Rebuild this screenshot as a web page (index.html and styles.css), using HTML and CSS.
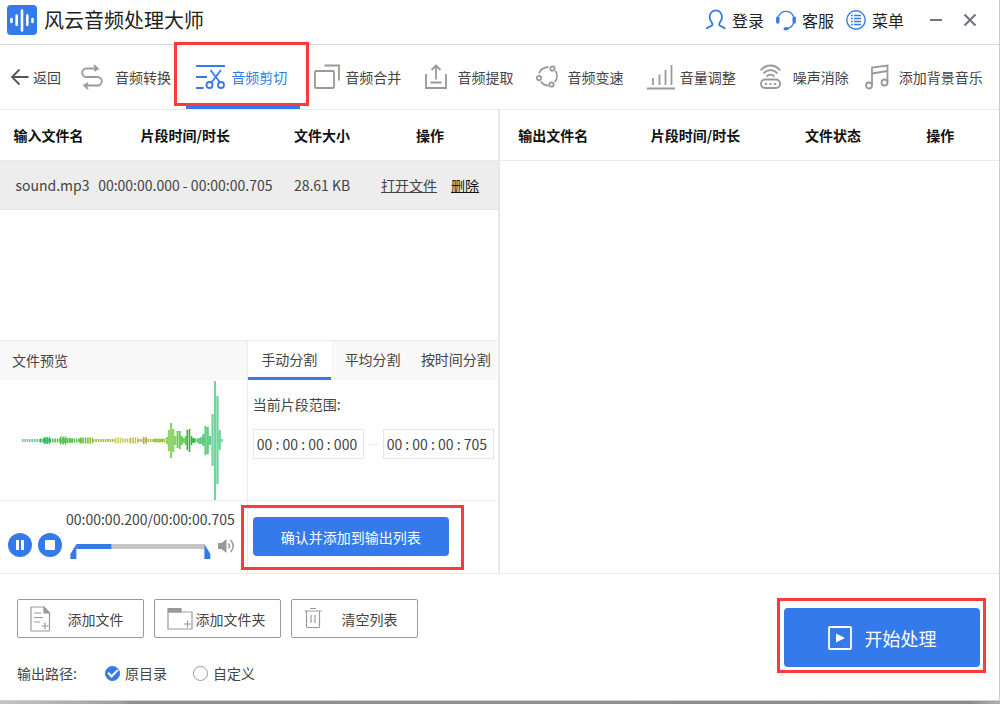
FILE: index.html
```html
<!DOCTYPE html>
<html lang="zh-CN">
<head>
<meta charset="utf-8">
<title>风云音频处理大师</title>
<link rel="stylesheet" href="styles.css">
</head>
<body>
<div class="window">
  <header class="titlebar">
    <svg class="logo" width="30" height="30" viewBox="0 0 30 30"><rect width="30" height="30" rx="4" fill="#357aea"/><path d="M4.500 14v3M9.700 10.500v9.500M15 5.500v20M20.300 10.500v9.500M25.500 14v3" stroke="#fff" stroke-width="2.600" stroke-linecap="round"/></svg>
    <h1 class="app-name">风云音频处理大师</h1>
    <nav class="account">
      <button class="account-item"><svg width="22" height="22" viewBox="0 0 22 22" fill="none" stroke="#357aea" stroke-width="1.800"><path d="M1.500 20c.8-2 3.800-2.200 5.500-3.500C8 15.500 7.500 14.500 6.500 13 5.200 11.200 4.600 9.500 4.600 8a6 6.500 0 0 1 12.400 0c0 1.500-.6 3.200-1.900 5-1 1.500-1.500 2.500-.5 3.500 1.700 1.300 4.700 1.500 5.500 3.500"/></svg>登录</button>
      <button class="account-item"><svg width="22" height="22" viewBox="0 0 22 22" fill="none" stroke="#357aea"><path d="M3.500 7.500a8 8 0 0 1 15 0M18.500 14c-1 3-3.500 5-6.500 5.500" stroke-width="1.300"/><path d="M2.800 9v4M19.200 9v4" stroke-width="3.400" stroke-linecap="round"/><path d="M10 19.800h2" stroke-width="3" stroke-linecap="round"/></svg>客服</button>
      <button class="account-item"><svg width="22" height="22" viewBox="0 0 22 22" fill="none" stroke="#357aea"><circle cx="11" cy="11" r="9.200" stroke-width="1.400"/><path d="M6 6.500h1.800M9 6.500h7M6 9.500h1.800M9 9.500h7M6 12.500h1.800M9 12.500h7M6 15.500h1.800M9 15.500h7" stroke-width="1.500"/></svg>菜单</button>
    </nav>
    <button class="win-button" aria-label="最小化"><svg width="14" height="14" viewBox="0 0 14 14"><path d="M1 7h12" stroke="#777380" stroke-width="2"/></svg></button>
    <button class="win-button" aria-label="关闭"><svg width="14" height="14" viewBox="0 0 14 14"><path d="M1.500 1.500l11 11M12.500 1.500l-11 11" stroke="#777380" stroke-width="2.200"/></svg></button>
  </header>

  <nav class="toolbar">
    <button class="tool tool-back"><svg width="18" height="20" viewBox="0 0 18 20" fill="none" stroke="#555" stroke-width="1.800"><path d="M17.500 10H1M8.500 2.500L1 10l7.500 7.500"/></svg>返回</button>
    <button class="tool tool-wide"><svg width="22" height="26" viewBox="0 0 22 26" fill="none" stroke="#999" stroke-width="1.800"><path d="M13 1.200l3.500 3.300H5.500a4.200 4.200 0 0 0 0 8.500h11a4.200 4.200 0 0 1 0 8.500H3.500L7 25M16.500 4.500L13.500 7M3.500 21.500L7 19"/></svg>音频转换</button>
    <button class="tool tool-tight tool-active"><svg width="30" height="26" viewBox="0 0 30 26" fill="none" stroke="#357aea" stroke-width="1.800"><path d="M0 2h29M0 13h11M0 24h7.500M14.500 6l9.500 12.500M25 6l-9.500 12.500"/><circle cx="13.500" cy="21" r="3"/><circle cx="25" cy="21" r="3"/></svg>音频剪切<span class="mark mark-tool"></span></button>
    <button class="tool tool-tight"><svg width="26" height="26" viewBox="0 0 26 26" fill="none" stroke="#999" stroke-width="1.800"><rect x="1" y="7" width="19" height="17" rx="1"/><path d="M10.500 1.500H25v15"/></svg>音频合并</button>
    <button class="tool"><svg width="22" height="26" viewBox="0 0 22 26" fill="none" stroke="#999" stroke-width="1.800"><path d="M1 10v14h20V10M11 15.500V2M6.500 6L11 1.500 15.500 6M5.500 18.500h11"/></svg>音频提取</button>
    <button class="tool"><svg width="22" height="26" viewBox="0 0 22 26" fill="none" stroke="#999" stroke-width="1.800"><circle cx="16.500" cy="4.500" r="2.200"/><circle cx="3" cy="14" r="2.200"/><circle cx="15.500" cy="20.500" r="2.200"/><path d="M3 9.500c1-3.500 4-6 9.500-6.500M19.500 7c2 3 2.200 7.500-.8 11M5 17.500c1.500 2.500 4 4 7.500 4"/></svg>音频变速</button>
    <button class="tool tool-tight"><svg width="28" height="26" viewBox="0 0 28 26" fill="none" stroke="#999" stroke-width="1.800"><path d="M0 24.500h28M6 21v-7M12.500 21V10.500M18.500 21V6M24.500 21V1"/></svg>音量调整</button>
    <button class="tool tool-wide"><svg width="21" height="26" viewBox="0 0 21 26" fill="none" stroke="#999" stroke-width="1.800"><path d="M.8 6.500C6-.2 15-.2 20.200 6.500M3.500 9.500c4-4.600 10-4.600 14 0M6.500 12.500c2.500-2.500 5.500-2.500 8 0"/><rect x="1" y="15.500" width="19" height="8.500" rx="4"/><path d="M5 20h2M9.500 20h2M14 20h2"/></svg>噪声消除</button>
    <button class="tool"><svg width="24" height="26" viewBox="0 0 24 26" fill="none" stroke="#999" stroke-width="1.800"><circle cx="4" cy="21.500" r="3"/><circle cx="19.500" cy="18.500" r="3"/><path d="M7 21.500V3.500L22.500 1.500v17M7 9.500l15.500-2.500"/></svg>添加背景音乐</button>
  </nav>

  <main class="workspace">
    <section class="input-pane">
      <table class="files files-in">
        <colgroup><col class="c-name"><col class="c-time"><col class="c-size"><col></colgroup>
        <thead><tr><th>输入文件名</th><th>片段时间/时长</th><th>文件大小</th><th>操作</th></tr></thead>
        <tbody><tr><td>sound.mp3</td><td>00:00:00.000 - 00:00:00.705</td><td>28.61 KB</td><td><a class="open" href="#open">打开文件</a><a class="remove" href="#remove">删除</a></td></tr></tbody>
      </table>
      <div class="editor">
        <section class="preview">
          <h2 class="preview-title">文件预览</h2>
          <svg class="wave" viewBox="0 0 247 120" height="120" fill="none">
            <g stroke-dasharray="1.600 .8">
              <path d="M22 60.500h18" stroke="#67cba0" stroke-width="3"/>
              <path d="M40 60.500h12" stroke="#2fb957" stroke-width="4"/>
              <path d="M44 60.500h6" stroke="#2fb957" stroke-width="7"/>
              <path d="M52 60.500h30" stroke="#54bf4c" stroke-width="4"/>
              <path d="M60 60.500h7" stroke="#54bf4c" stroke-width="8"/>
              <path d="M67 60.500h6" stroke="#60c253" stroke-width="5"/>
              <path d="M80 60.500h13" stroke="#7cba38" stroke-width="6"/>
              <path d="M93 60.500h22" stroke="#a6bd3b" stroke-width="3"/>
              <path d="M115 60.500h7" stroke="#cbd064" stroke-width="6"/>
              <path d="M122 60.500h8" stroke="#c8c958" stroke-width="4"/>
              <path d="M130 60.500h8" stroke="#c4c44b" stroke-width="6"/>
              <path d="M138 60.500h26" stroke="#a9ba30" stroke-width="3"/>
              <path d="M143 60.500h4" stroke="#a9ba30" stroke-width="7"/>
              <path d="M154 60.500h12" stroke="#8fcb49" stroke-width="4"/>
              <path d="M192 60.500h14" stroke="#42be5f" stroke-width="4"/>
              <path d="M219 60.500h4" stroke="#67d09a" stroke-width="3"/>
            </g>
            <path d="M167 57v7M169 50v21M171.300 43v35M173.500 49v23M175.500 56v9" stroke="#8dd266" stroke-width="2.100"/>
            <path d="M177.700 51v17M180 51v18M182 56v9M184 58v5M186 56v9" stroke="#67ce4f" stroke-width="1.900"/>
            <path d="M187.500 50v20M189.700 49v23M191.800 56v9M194 58v5" stroke="#2fb82f" stroke-width="1.600"/>
            <path d="M199.500 58v6M201.500 57v7M203.500 54v12M205.700 46v29M208 47v27M210.200 56v9" stroke="#5fce80" stroke-width="2.100"/>
            <path d="M212.700 34v52M215.200 1v119M217.700 16v88M220 50v20" stroke="#74d4a0" stroke-width="2.200"/>
          </svg>
          <div class="player">
            <div class="player-buttons">
              <button class="round" aria-label="暂停"><svg width="24" height="24" viewBox="0 0 24 24"><circle cx="12" cy="12" r="12" fill="#357aea"/><path d="M9.500 7v10M14.500 7v10" stroke="#fff" stroke-width="3"/></svg></button>
              <button class="round" aria-label="停止"><svg width="24" height="24" viewBox="0 0 24 24"><circle cx="12" cy="12" r="12" fill="#357aea"/><rect x="7" y="7" width="10" height="10" rx="1" fill="#fff"/></svg></button>
            </div>
            <div class="player-main">
              <div class="clock">00:00:00.200/00:00:00.705</div>
              <div class="seek">
                <svg class="track" height="18" viewBox="0 0 140 18"><path d="M6 5.500h128" stroke="#c6c6c6" stroke-width="5"/><path d="M6 5.500h35" stroke="#357aea" stroke-width="5"/><path d="M0 18v-5l6-10v15zM134 3l6 10v5h-6z" fill="#357aea"/></svg>
                <button class="round" aria-label="音量"><svg width="17" height="16" viewBox="0 0 17 16"><path d="M0 5h3.500L8.500 1v14L3.500 11H0z" fill="#999"/><path d="M10.500 5.500q2 2.500 0 5M12.500 2q5.500 6 0 12" fill="none" stroke="#999" stroke-width="1.500"/></svg></button>
              </div>
            </div>
          </div>
        </section>
        <section class="split">
          <div class="tabs" role="tablist">
            <button class="tab tab-on" role="tab" aria-selected="true">手动分割</button>
            <button class="tab" role="tab">平均分割</button>
            <button class="tab" role="tab">按时间分割</button>
          </div>
          <div class="range">
            <label class="range-label" for="from">当前片段范围:</label>
            <div class="range-fields">
              <input class="time" id="from" value="00 : 00 : 00 : 000">
              <span class="dash"></span>
              <input class="time" id="to" aria-label="结束时间" value="00 : 00 : 00 : 705">
            </div>
          </div>
          <div class="confirm">
            <button class="primary confirm-button">确认并添加到输出列表<span class="mark mark-confirm"></span></button>
          </div>
        </section>
      </div>
    </section>
    <section class="output-pane">
      <table class="files files-out">
        <colgroup><col class="c-name"><col class="c-time"><col class="c-size"><col></colgroup>
        <thead><tr><th>输出文件名</th><th>片段时间/时长</th><th>文件状态</th><th>操作</th></tr></thead>
      </table>
    </section>
  </main>

  <footer class="footer">
    <div class="footer-left">
      <div class="actions">
        <button class="action"><svg width="22" height="26" viewBox="0 0 22 26" fill="none" stroke="#999" stroke-width="1.200"><path d="M19.500 7v17a1 1 0 0 1-1 1H2a1 1 0 0 1-1-1V2a1 1 0 0 1 1-1h12"/><path d="M14 1l5.500 6H14z" fill="#999"/><path d="M4 7h7M4 11.500h9M4 16h6M11.500 20h7M15 16.500v7"/></svg><span>添加文件</span></button>
        <button class="action"><svg width="26" height="26" viewBox="0 0 26 26" fill="none" stroke="#999" stroke-width="1.200"><path d="M1 6v17h24V6z"/><path d="M1 6V2.500h13V6z" fill="#999"/><path d="M17 18h7M20.500 14.500v7"/></svg><span>添加文件夹</span></button>
        <button class="action"><svg width="18" height="26" viewBox="0 0 18 26" fill="none" stroke="#999" stroke-width="1.200"><path d="M.5 5h17M6 2.500h6M2.500 5v15.500a1 1 0 0 0 1 1h11a1 1 0 0 0 1-1V5M7 9v8M11 9v8"/></svg><span>清空列表</span></button>
      </div>
      <div class="path">
        <span class="path-label">输出路径:</span>
        <label class="choice"><input class="radio" type="radio" name="path" checked>原目录</label>
        <label class="choice"><input class="radio" type="radio" name="path">自定义</label>
      </div>
    </div>
    <button class="primary start"><svg width="24" height="24" viewBox="0 0 24 24"><rect x="1" y="1" width="22" height="22" rx="1" fill="none" stroke="#fff" stroke-width="1.800"/><path d="M8 7.500l9 4.500-9 4.500z" fill="#fff"/></svg>开始处理<span class="mark mark-start"></span></button>
  </footer>
</div>
</body>
</html>
```
FILE: styles.css
```css
* { box-sizing: border-box; }
body {
  margin: 0;
  padding-bottom: 3px;
  background: linear-gradient(90deg, #c4c4c4, #a0a0a0 12%, #8e8e94 13%, #8e8e94 34%, #929292 35%, #8c8c8c 97%, #b0b0b0);
  color: #444;
  font: 14px/20px "Noto Sans CJK SC", sans-serif;
}
button {
  padding: 0;
  border: 0;
  background: none;
  color: inherit;
  font: inherit;
  white-space: nowrap;
}
svg { display: block; flex: none; }

.window {
  display: flex;
  flex-direction: column;
  min-height: calc(100vh - 3px);
  background: #fff;
  border-right: 1px solid #ccc;
  border-bottom: 1px solid #d0d0d0;
}

.titlebar {
  display: flex;
  align-items: center;
  height: 45px;
  padding: 0 22px 4px 7px;
  border-bottom: 1px solid #d6d6d6;
}
.app-name {
  margin: 0 auto 0 7px;
  color: #222;
  font-size: 20px;
  font-weight: 400;
  line-height: 28px;
}
.account { display: flex; gap: 11px; margin-right: 25px; }
.account-item {
  display: flex;
  align-items: center;
  gap: 5px;
  color: #222;
  font-size: 16px;
}
.win-button { margin-left: 20px; }
.account + .win-button { margin-left: 0; }

.toolbar {
  display: grid;
  grid-template-columns: 70fr 105fr 128fr 111fr 110fr 111fr 113fr 105fr 122fr;
  height: 65px;
  padding: 0 12px 0 11px;
  border-bottom: 1px solid #ebebeb;
}
.tool {
  display: flex;
  align-items: center;
  justify-self: start;
  gap: 10px;
}
.tool-back { gap: 4px; }
.tool-tight { gap: 5px; }
.tool-wide { gap: 12px; }
.tool-active {
  position: relative;
  padding: 3px 13px 0 10px;
  border-bottom: 3px solid #357aea;
  color: #357aea;
}

.mark {
  position: absolute;
  border: 3px solid #fb3a3a;
  pointer-events: none;
}
.mark-tool { inset: -3px -9px 0 -12px; }
.mark-confirm { inset: -12px -15px -14px -12px; }
.mark-start { inset: -10px -6px -6px -7px; }

.workspace {
  display: grid;
  grid-template-columns: 1fr 1fr;
  flex: 1;
}
.input-pane {
  display: flex;
  flex-direction: column;
  justify-content: space-between;
  border-right: 2px solid #e8e8e8;
}
.files {
  width: 100%;
  border-collapse: collapse;
  table-layout: fixed;
  text-align: center;
  white-space: nowrap;
}
.files th {
  height: 50px;
  padding: 0;
  border-bottom: 1px solid #ebebeb;
  color: #111;
  font-weight: 700;
}
.files td {
  height: 49px;
  padding: 0;
  border-bottom: 1px solid #e6e6e6;
  background: #ededed;
}
.files-in td:first-child { padding-left: 8px; }
.files-in th:last-child, .files-in td:last-child { padding-right: 8px; }
.files-in .c-name { width: 19.500%; }
.files-out .c-name { width: 21.500%; }
.c-time { width: 35.500%; }
.c-size { width: 19.500%; }
.open { color: #444; }
.remove { margin-left: 14px; color: #111; }

.editor {
  display: grid;
  grid-template-columns: 248fr 250fr;
  border-top: 1px solid #ebebeb;
}
.preview { border-right: 1px solid #ebebeb; }
.preview-title {
  margin: 0;
  padding: 9px 12px 10px;
  background: #f8f8f8;
  font-size: 14px;
  font-weight: 400;
}
.wave { width: 100%; }
.player {
  display: flex;
  align-items: flex-end;
  gap: 8px;
  height: 73px;
  padding: 0 12px 14px 8px;
  border-top: 1px solid #ebebeb;
}
.player-buttons { display: flex; gap: 6px; padding-bottom: 2px; }
.player-main { flex: 1; }
.clock { margin: 0 0 12px -4px; white-space: nowrap; }
.seek { display: flex; align-items: flex-start; gap: 7px; }
.seek .round { margin-top: -3px; }
.track { flex: 1; min-width: 0; }

.split { display: flex; flex-direction: column; min-width: 0; }
.tabs { display: flex; height: 39px; background: #f8f8f8; }
.tab { flex: 83; padding-bottom: 4px; }
.tab-on {
  padding-bottom: 1px;
  border-bottom: 3px solid #357aea;
  background: #fff;
}
.range {
  flex: 1;
  padding: 14px 4px 0 5px;
  border-bottom: 1px solid #ebebeb;
}
.range-label { display: block; margin-bottom: 15px; }
.range-fields { display: flex; align-items: center; gap: 5px; }
.time {
  flex: 1;
  min-width: 0;
  height: 30px;
  padding: 0 3px;
  border: 1px solid #e6e6e6;
  color: #444;
  font: inherit;
}
.dash { width: 9px; height: 1px; background: #e6e6e6; }
.confirm { height: 72px; padding: 16px 5px; }
.primary {
  position: relative;
  border-radius: 4px;
  background: #357aea;
  color: #fff;
}
.confirm-button { width: 196px; height: 39px; }

.footer {
  display: flex;
  align-items: flex-start;
  justify-content: space-between;
  padding: 25px 19px 17px 17px;
  border-top: 1px solid #ebebeb;
}
.actions { display: flex; gap: 10px; }
.action {
  display: flex;
  align-items: center;
  width: 127px;
  height: 39px;
  padding: 0 12px;
  border: 1px solid #999;
  border-radius: 2px;
}
.action span { flex: 1; }
.action:first-child span { padding-left: 8px; }
.action:last-child span { padding-left: 12px; }
.path { display: flex; align-items: center; margin-top: 25px; }
.path-label { width: 88px; }
.choice { display: flex; align-items: center; gap: 5px; margin-right: 26px; }
.radio {
  width: 15px;
  height: 15px;
  margin: 0;
  appearance: none;
  border: 1px solid #999;
  border-radius: 50%;
}
.radio:checked {
  display: grid;
  place-items: center;
  border-color: #357aea;
  background: #357aea;
}
.radio:checked::after {
  content: "";
  width: 8px;
  height: 4px;
  margin-bottom: 2px;
  border: solid #fff;
  border-width: 0 0 2px 2px;
  rotate: -45deg;
}
.start {
  display: flex;
  align-items: center;
  justify-content: center;
  gap: 13px;
  width: 196px;
  height: 59px;
  margin-top: 9px;
  font-size: 18px;
}
```
